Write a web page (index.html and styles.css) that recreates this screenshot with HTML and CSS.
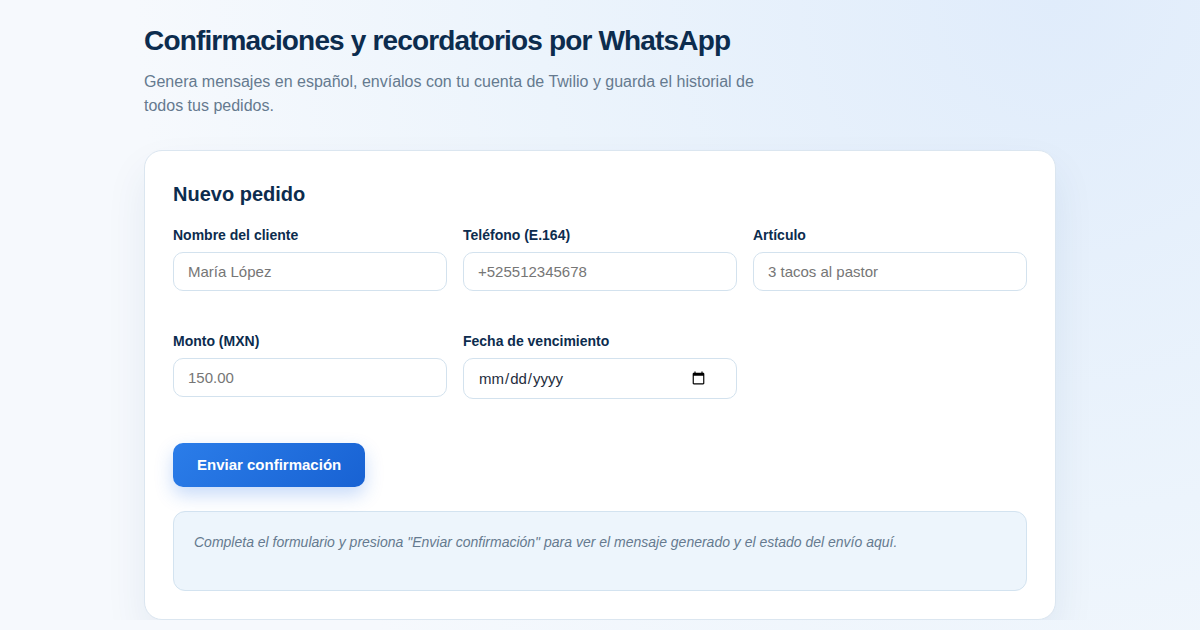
FILE: index.html
```html
<!DOCTYPE html>
<html lang="es">
<head>
  <meta charset="UTF-8">
  <title>Confirmaciones por WhatsApp</title>
  <link rel="stylesheet" href="styles.css">
</head>
<body>
<div class="pagina">
  <h1>Confirmaciones y recordatorios por WhatsApp</h1>
  <p class="subtitulo">Genera mensajes en español, envíalos con tu cuenta de Twilio y guarda el historial de todos tus pedidos.</p>

  <div class="tarjeta">
    <h2>Nuevo pedido</h2>
    <form class="formulario" onsubmit="return false">
      <div class="campos">
        <div class="campo">
          <label for="nombre">Nombre del cliente</label>
          <input type="text" id="nombre" placeholder="María López">
        </div>
        <div class="campo">
          <label for="telefono">Teléfono (E.164)</label>
          <input type="text" id="telefono" placeholder="+525512345678">
        </div>
        <div class="campo">
          <label for="articulo">Artículo</label>
          <input type="text" id="articulo" placeholder="3 tacos al pastor">
        </div>
        <div class="campo">
          <label for="monto">Monto (MXN)</label>
          <input type="text" id="monto" placeholder="150.00">
        </div>
        <div class="campo">
          <label for="fecha">Fecha de vencimiento</label>
          <input type="date" id="fecha" class="fecha">
        </div>
      </div>
      <button type="submit" id="btnEnviar">Enviar confirmación</button>
    </form>

    <div class="resultado">
      Completa el formulario y presiona "Enviar confirmación" para ver el mensaje generado y el estado del envío aquí.
    </div>
  </div>
</div>
</body>
</html>
```

FILE: styles.css
```css
html {
  min-height: 100%;
  background: radial-gradient(circle at 88% 0%, #e0ecfb 0%, #ecf4fc 42%, #f6f9fd 75%);
}

body {
  font-family: "Liberation Sans", Arial, sans-serif;
  margin: 0;
  padding: 0;
  color: #0d2b4c;
}

.pagina {
  max-width: 912px;
  margin: 0 auto;
  padding-top: 24px;
}

h1 {
  font-size: 28px;
  line-height: 1.2;
  letter-spacing: -0.03em;
  margin: 0 0 12px;
  color: #0c2c4e;
}

.subtitulo {
  font-size: 16px;
  line-height: 24px;
  color: #657a8f;
  max-width: 640px;
  margin: 0 0 32px;
}

.tarjeta {
  background: #fff;
  border: 1px solid #dbe6f0;
  border-radius: 18px;
  padding: 31px 28px 28px;
  box-shadow: 0 20px 40px rgba(30, 70, 120, 0.08);
}

h2 {
  font-size: 20px;
  line-height: 24px;
  margin: 0 0 21px;
  color: #0c2c4e;
}

.campos {
  display: grid;
  grid-template-columns: repeat(3, 1fr);
  gap: 42px 16px;
}

.campo {
  display: flex;
  flex-direction: column;
}

label {
  font-size: 14px;
  font-weight: bold;
  line-height: 17px;
  margin-bottom: 8px;
  color: #0c2c4e;
}

input {
  font-family: "Liberation Sans", Arial, sans-serif;
  font-size: 15px;
  padding: 10px 14px;
  border: 1px solid #d3e2ee;
  border-radius: 10px;
  background: #fff;
  color: #1e2d3d;
  box-sizing: border-box;
  width: 100%;
}

input::placeholder {
  color: #767676;
}

.fecha {
  padding-right: 28px;
}

#btnEnviar {
  margin-top: 44px;
  height: 44px;
  padding: 0 24px;
  border: none;
  border-radius: 10px;
  background: linear-gradient(135deg, #2b7de9, #1862d3);
  color: #fff;
  font-family: "Liberation Sans", Arial, sans-serif;
  font-size: 15px;
  font-weight: bold;
  cursor: pointer;
  box-shadow: 0 8px 18px rgba(37, 110, 230, 0.25);
}

.resultado {
  margin-top: 24px;
  min-height: 80px;
  box-sizing: border-box;
  padding: 20px;
  background: #edf5fc;
  border: 1px solid #d3e3f0;
  border-radius: 12px;
  font-size: 14px;
  line-height: 21px;
  font-style: italic;
  color: #657a8f;
}
```
